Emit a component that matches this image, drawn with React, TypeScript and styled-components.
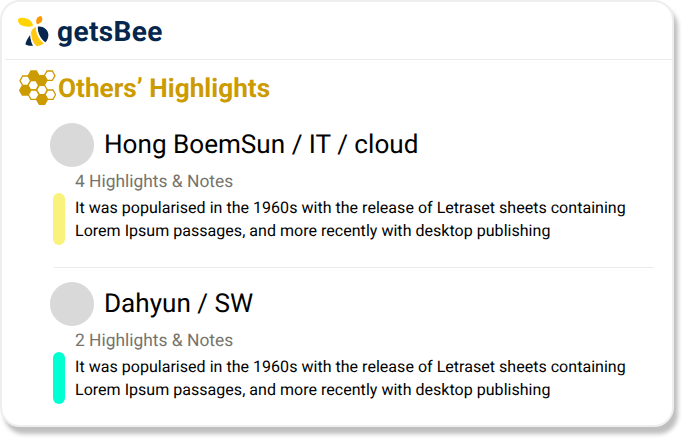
import React from "react";
import styled, { createGlobalStyle } from "styled-components";

const GlobalStyle = createGlobalStyle`
  * { box-sizing: border-box; }
  body {
    margin: 0;
    background: #fff;
    font-family: Roboto, sans-serif;
    text-rendering: geometricPrecision;
  }
`;

const Page = styled.div`
  width: 682px;
  height: 439px;
  overflow: hidden;
`;

const Card = styled.main`
  width: 674px;
  height: 427px;
  border: 2px solid #eeeeee;
  border-radius: 20px;
  background: #fff;
  box-shadow: 4px 7px 4px rgba(0, 0, 0, 0.25);
  display: flex;
  flex-direction: column;
`;

const Header = styled.header`
  height: 58px;
  margin-left: 3px;
  padding: 13px 0 0 12px;
  border-bottom: 1px solid #ebebeb;
  display: flex;
`;

const BrandName = styled.span`
  margin-left: 8px;
  font-size: 28px;
  line-height: 34px;
  font-weight: 700;
  letter-spacing: 0.4px;
  color: #05264d;
  white-space: nowrap;
`;

const SectionTitle = styled.h1`
  display: flex;
  height: 61px;
  margin: 0;
  padding: 12px 0 0 17px;
  color: #cc9b00;
  font-size: 26.2px;
  line-height: 34px;
  font-weight: 700;
  white-space: nowrap;

  svg { margin-top: -2px; }
  span { margin-left: 2px; }
`;

const Entry = styled.section<{ $divided?: boolean }>`
  width: 600px;
  height: ${(p) => (p.$divided ? 147 : 144)}px;
  margin: ${(p) => (p.$divided ? "0 0 12px 52px" : "0 0 0 52px")};
  border-bottom: ${(p) => (p.$divided ? "1px solid #ebebeb" : "none")};
`;

const Author = styled.div`
  display: flex;
  margin-left: -4px;
  height: 50px;
`;

const Avatar = styled.div`
  width: 43.6px;
  height: 43.6px;
  margin-top: 2px;
  border-radius: 50%;
  background: #d9d9d9;
`;

const AuthorName = styled.h2`
  margin: 6px 0 0 10.4px;
  font-size: 26.1px;
  line-height: 36px;
  font-weight: 400;
  color: #000;
  white-space: nowrap;
`;

const Count = styled.div`
  height: 22px;
  padding-top: 1px;
  margin-left: 21px;
  font-size: 17.4px;
  line-height: 20px;
  color: #75746c;
  white-space: nowrap;
`;

const Highlight = styled.div`
  display: flex;
`;

const Marker = styled.div<{ $color: string }>`
  width: 12px;
  height: 52px;
  margin: 0 1px 0 -1px;
  border-radius: 6px;
  background: ${(p) => p.$color};
`;

const Quote = styled.p`
  margin: 3px 0 0 9px;
  font-size: 16px;
  line-height: 23px;
  letter-spacing: 0.03px;
  color: #000;
  white-space: nowrap;
`;

const BeeIcon = () => (
  <svg width="32" height="33" viewBox="21 21 96 99">
    <path fill="#ffd400" d="M24 35C27 27 42 28 53 33C63 37 69 47 69 53C59 58 43 57 34 52C27 48 24 43 24 35Z" />
    <path fill="#ff9800" d="M81 49C75 38 80 25 93 24C102 35 95 46 81 49Z" />
    <path fill="#05264d" d="M62 79C57 86 49 97 46 109C54 114 62 114 69 113C64 106 61 94 62 79Z" />
    <path fill="#ffc913" d="M78 57C68 60 62 69 63 79C64 94 70 106 80 115C89 114 97 110 102 106C89 96 77 79 78 57Z" />
    <path fill="#05264d" d="M83 56C98 53 113 64 115 78C116 88 112 98 106 103C93 93 82 75 83 56Z" />
    <path
      fill="none"
      stroke="#fff"
      strokeWidth="3"
      d="M81 55C80 76 90 94 104 105M62 78C62 94 67 106 75 116"
    />
  </svg>
);

const CELLS: [number, number, boolean][] = [
  [46, 59, false],
  [119, 44, false],
  [70, 73, false],
  [96, 87, false],
  [71, 101, false],
  [121, 101, false],
  [71, 44, true],
  [95, 58, true],
  [45, 88, true],
  [96, 116, true],
];

const HoneycombIcon = () => (
  <svg width="37" height="36" viewBox="27 27 111 108">
    {CELLS.map(([x, y, filled]) => (
      <path
        key={`${x}-${y}`}
        d={`M${x - 16} ${y}l8 -14h16l8 14l-8 14h-16z`}
        fill={filled ? "#cc9b00" : "#fff"}
        stroke="#cc9b00"
        strokeWidth="3.8"
      />
    ))}
  </svg>
);

const entries = [
  { name: "Hong BoemSun / IT / cloud", count: 4, color: "#f9f27c" },
  { name: "Dahyun / SW", count: 2, color: "#00ffd1" },
];

export default function App() {
  return (
    <>
      <GlobalStyle />
      <Page>
        <Card>
          <Header>
            <BeeIcon />
            <BrandName>getsBee</BrandName>
          </Header>
          <SectionTitle>
            <HoneycombIcon />
            <span>Others’ Highlights</span>
          </SectionTitle>
          {entries.map((entry, i) => (
            <Entry key={entry.name} $divided={i === 0}>
              <Author>
                <Avatar />
                <AuthorName>{entry.name}</AuthorName>
              </Author>
              <Count>{entry.count} Highlights &amp; Notes</Count>
              <Highlight>
                <Marker $color={entry.color} />
                <Quote>
                  It was popularised in the 1960s with the release of Letraset sheets containing
                  <br />
                  Lorem Ipsum passages, and more recently with desktop publishing
                </Quote>
              </Highlight>
            </Entry>
          ))}
        </Card>
      </Page>
    </>
  );
}
